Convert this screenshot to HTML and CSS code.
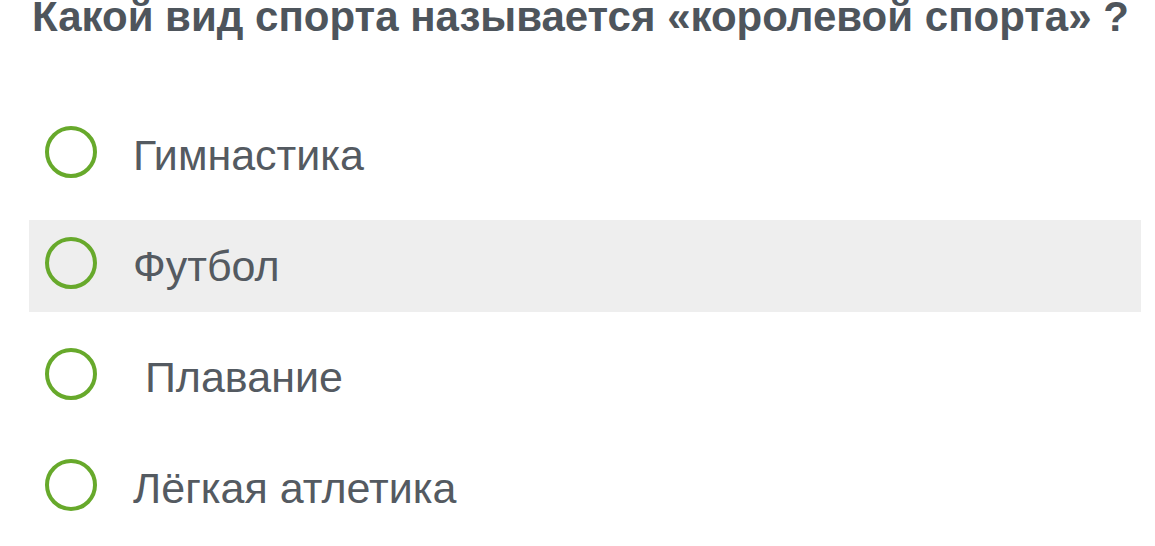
FILE: index.html
```html
<!DOCTYPE html>
<html lang="ru">
<head>
<meta charset="utf-8">
<title>Вопрос</title>
<link rel="stylesheet" href="styles.css">
</head>
<body>
  <div class="quiz">
    <h1 class="question">Какой вид спорта называется «королевой спорта» ?</h1>
    <ul class="answers">
      <li class="answer"><span class="radio"></span><span class="label">Гимнастика</span></li>
      <li class="answer hover"><span class="radio"></span><span class="label">Футбол</span></li>
      <li class="answer"><span class="radio"></span><span class="label">&nbsp;Плавание</span></li>
      <li class="answer"><span class="radio"></span><span class="label">Лёгкая атлетика</span></li>
    </ul>
  </div>
</body>
</html>
```
FILE: styles.css
```css
* {margin:0;padding:0}
ul,li {list-style:none}
body {background:#fff;font-family:"Liberation Sans",Arial,sans-serif;color:#545a61}

.quiz {width:1112px;padding:0 0 0 29px}
.question {font-size:42px;line-height:34px;font-weight:bold;color:#4e555c;margin-left:3px;white-space:nowrap}

.answers {display:flex;flex-direction:column;gap:19px;margin-top:75px}
.answer {height:92px;display:flex;align-items:center;padding-left:16px}
.answer.hover {background:#eeeeee}
.radio {width:52px;height:52px;box-sizing:border-box;border:4.5px solid #67a92b;border-radius:50%;flex:none;margin-bottom:7px}
.label {font-size:43px;margin-left:36px;white-space:pre}
```
